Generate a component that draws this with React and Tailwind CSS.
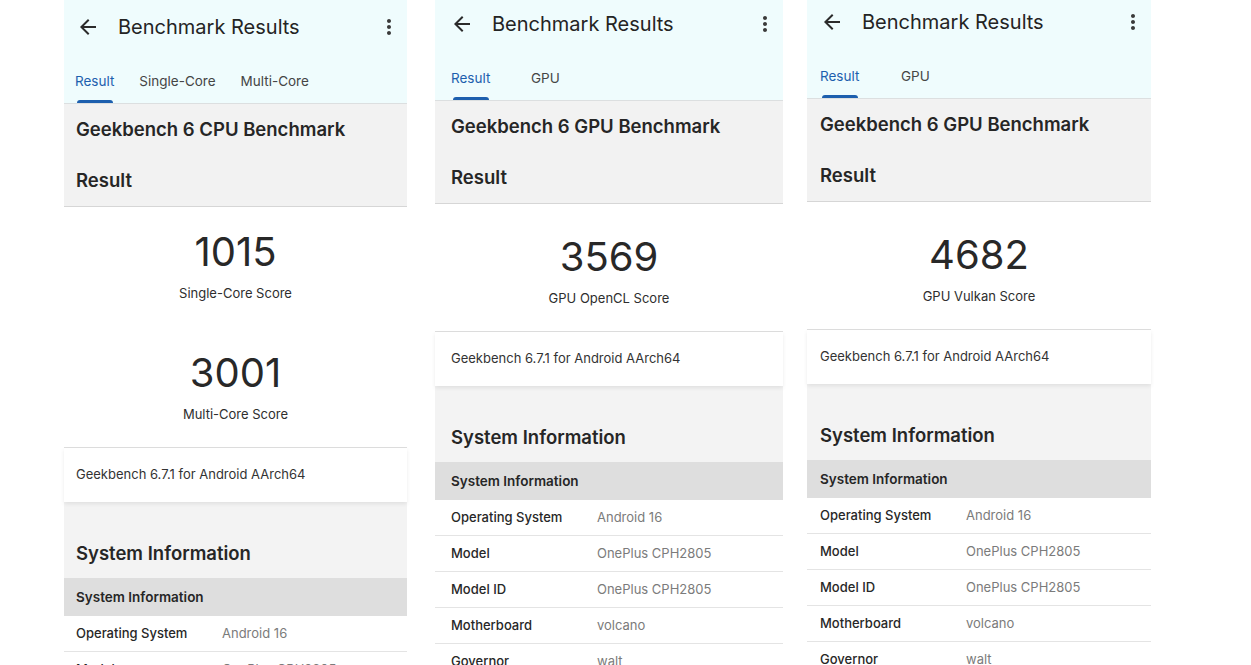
import React from "react";

const ROWS = [
  ["Operating System", "Android 16"],
  ["Model", "OnePlus CPH2805"],
  ["Model ID", "OnePlus CPH2805"],
  ["Motherboard", "volcano"],
  ["Governor", "walt"],
];

const PANELS = [
  {
    width: "w-[343px]",
    shift: "mt-0",
    pad: "pl-[12px]",
    headPad: "pl-[12px]",
    tabGap: "gap-[25px]",
    tabPad: "pl-[11px]",
    tabs: ["Result", "Single-Core", "Multi-Core"],
    heading: "Geekbench 6 CPU Benchmark",
    scoreTop: "pt-[21px]",
    scores: [
      ["1015", "Single-Core Score"],
      ["3001", "Multi-Core Score"],
    ],
  },
  {
    width: "w-[348px]",
    shift: "-mt-[3px]",
    pad: "pl-[16px]",
    headPad: "pl-[15px]",
    tabGap: "gap-[37px]",
    tabPad: "pl-[16px]",
    tabs: ["Result", "GPU"],
    heading: "Geekbench 6 GPU Benchmark",
    scoreTop: "pt-[29px]",
    scores: [["3569", "GPU OpenCL Score"]],
  },
  {
    width: "w-[344px]",
    shift: "-mt-[5px]",
    pad: "pl-[13px]",
    headPad: "pl-[13px]",
    tabGap: "gap-[38px]",
    tabPad: "pl-[13px]",
    tabs: ["Result", "GPU"],
    heading: "Geekbench 6 GPU Benchmark",
    scoreTop: "pt-[29px]",
    scores: [["4682", "GPU Vulkan Score"]],
  },
];

function BackIcon() {
  return (
    <svg width="24" height="24" viewBox="0 0 24 24" className="fill-[#2b2b2b] shrink-0">
      <path d="M20 11H7.83l5.59-5.59L12 4l-8 8 8 8 1.41-1.41L7.83 13H20v-2z" />
    </svg>
  );
}

function MoreIcon() {
  return (
    <svg width="24" height="24" viewBox="0 0 24 24" className="fill-[#3a3a3a] shrink-0">
      <path d="M12 8c1.1 0 2-.9 2-2s-.9-2-2-2-2 .9-2 2 .9 2 2 2zm0 2c-1.1 0-2 .9-2 2s.9 2 2 2 2-.9 2-2-.9-2-2-2zm0 6c-1.1 0-2 .9-2 2s.9 2 2 2 2-.9 2-2-.9-2-2-2z" />
    </svg>
  );
}

function Panel({ p }) {
  return (
    <div className={`${p.width} ${p.shift} shrink-0 flex flex-col bg-white`}>
      {/* app bar + tabs */}
      <div className="bg-[#effcfd] border-b border-[#dcdfe0] h-[104px] flex flex-col">
        <div className={`h-[54px] flex items-center ${p.headPad} pr-[6px]`}>
          <BackIcon />
          <div className="ml-[18px] flex-1 text-[20px] text-[#242424]">Benchmark Results</div>
          <MoreIcon />
        </div>
        <div className={`flex ${p.tabGap} ${p.tabPad}`}>
          {p.tabs.map((t, i) => (
            <div key={t} className="flex flex-col items-center">
              <div
                className={`pt-[17px] h-[37px] leading-[20px] text-[13.5px] ${
                  i === 0 ? "text-[#1d5fae]" : "text-[#454545]"
                }`}
              >
                {t}
              </div>
              <div
                className={`mt-[9px] h-[3px] w-[36px] rounded-t-[3px] ${
                  i === 0 ? "bg-[#1d5fae]" : "bg-transparent"
                }`}
              />
            </div>
          ))}
        </div>
      </div>

      {/* heading */}
      <div className={`bg-[#f2f2f2] border-b border-[#d6d6d6] ${p.pad}`}>
        <div className="h-[51px] flex items-center text-[18.5px] font-semibold text-[#262626]">
          {p.heading}
        </div>
        <div className="h-[51px] flex items-center text-[18.5px] font-semibold text-[#262626]">
          Result
        </div>
      </div>

      {/* scores */}
      <div className={`border-b border-[#dedede] ${p.scoreTop} pb-[23px] flex flex-col items-center`}>
        {p.scores.map(([n, label], i) => (
          <div key={n} className={`flex flex-col items-center ${i > 0 ? "mt-[46px]" : ""}`}>
            <div className="text-[40px] leading-[48px] text-[#282828]">{n}</div>
            <div className="mt-[7px] text-[13px] leading-[20px] text-[#2e2e2e]">{label}</div>
          </div>
        ))}
      </div>

      {/* version */}
      <div
        className={`relative z-10 h-[54px] flex items-center ${p.pad} text-[13px] text-[#333] bg-white shadow-[0_2px_4px_rgba(0,0,0,0.08)]`}
      >
        Geekbench 6.7.1 for Android AArch64
      </div>

      {/* system information */}
      <div className={`bg-[#f3f3f3] h-[76px] pt-[38px] ${p.pad} text-[18.5px] leading-[26px] font-semibold text-[#262626]`}>
        System Information
      </div>
      <div className={`bg-[#dedede] h-[38px] flex items-center ${p.pad} text-[13.5px] font-semibold text-[#262626]`}>
        System Information
      </div>
      {ROWS.map(([k, v]) => (
        <div key={k} className={`h-[36px] border-b border-[#e4e4e4] flex items-center ${p.pad}`}>
          <div className="w-[146px] shrink-0 text-[13px] font-medium text-[#272727]">{k}</div>
          <div className="text-[13px] text-[#7b7b7b]">{v}</div>
        </div>
      ))}
    </div>
  );
}

export default function App() {
  return (
    <div
      className="h-[665px] w-[1251px] overflow-hidden bg-white flex items-start pl-[64px]"
      style={{ fontFamily: "Inter, 'Noto Sans', sans-serif" }}
    >
      <Panel p={PANELS[0]} />
      <div className="w-[28px] shrink-0" />
      <Panel p={PANELS[1]} />
      <div className="w-[24px] shrink-0" />
      <Panel p={PANELS[2]} />
    </div>
  );
}
